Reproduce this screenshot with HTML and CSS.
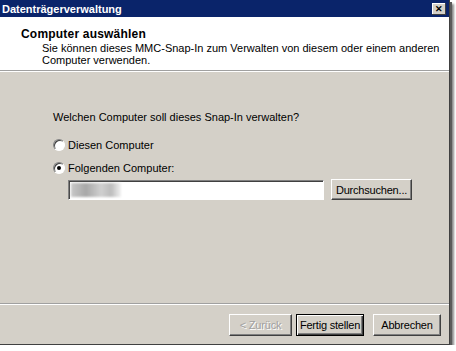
FILE: index.html
```html
<!DOCTYPE html>
<html lang="de">
  <head>
    <meta charset="UTF-8">
    <title>Datenträgerverwaltung</title>
    <link rel="stylesheet" href="styles.css">
  </head>
  <body>
    <div class="window">
      <div class="titlebar">
        <span class="title">Datenträgerverwaltung</span>
        <span class="close">&#x2715;</span>
      </div>

      <div class="header">
        <div class="header-title">Computer auswählen</div>
        <div class="header-text">
          Sie können dieses MMC-Snap-In zum Verwalten von diesem oder einem anderen<br>
          Computer verwenden.
        </div>
      </div>

      <div class="content">
        <p class="question">Welchen Computer soll dieses Snap-In verwalten?</p>

        <label class="radio-row">
          <span class="radio"></span>
          Diesen Computer
        </label>
        <label class="radio-row">
          <span class="radio checked"></span>
          Folgenden Computer:
        </label>

        <div class="input-row">
          <div class="textbox"><span class="blurred"></span></div>
          <button class="btn browse">Durchsuchen...</button>
        </div>
      </div>

      <div class="footer">
        <button class="btn disabled">&lt; Zurück</button>
        <button class="btn default">Fertig stellen</button>
        <button class="btn cancel">Abbrechen</button>
      </div>
    </div>
  </body>
</html>
```

FILE: styles.css
```css
body {
  margin: 0;
  background-color: #fff;
  font-family: "Liberation Sans", Arial, sans-serif;
  font-size: 11px;
  color: #000;
}
.window {
  width: 450px;
  height: 345px;
  display: flex;
  flex-direction: column;
  background-color: #d4d0c8;
  border-right: 1px solid #404040;
  border-bottom: 1px solid #404040;
  box-sizing: border-box;
  box-shadow: 2px 2px 0 #5a5a5a, 4px 4px 2px #8a8a8a;
}
.titlebar {
  height: 17px;
  background-color: #0a246a;
  color: #fff;
  display: flex;
  align-items: center;
  justify-content: space-between;
  padding: 0 3px 0 2px;
}
.title {
  font-weight: bold;
  font-size: 11px;
}
.close {
  width: 14px;
  height: 12px;
  background-color: #d4d0c8;
  color: #000;
  font-size: 9px;
  font-weight: bold;
  line-height: 12px;
  text-align: center;
  box-sizing: border-box;
  box-shadow: inset -1px -1px #404040, inset 1px 1px #fff;
}
.header {
  height: 54px;
  background-color: #fff;
  padding: 10px 0 0 21px;
  box-sizing: border-box;
  border-bottom: 1px solid #a0a0a0;
  box-shadow: 0 1px 0 #fff;
}
.header-title {
  font-weight: bold;
  font-size: 12px;
  letter-spacing: 0.2px;
  margin-bottom: 1px;
}
.header-text {
  padding-left: 21px;
  line-height: 12px;
}
.content {
  flex: 1;
  padding: 40px 0 0 53px;
  border-bottom: 1px solid #a0a0a0;
  box-shadow: 0 1px 0 #fff;
}
.question {
  margin: 0 0 16px 0;
}
.radio-row {
  display: flex;
  align-items: center;
  gap: 3px;
  height: 12px;
  margin-bottom: 11px;
}
.radio {
  width: 12px;
  height: 12px;
  border-radius: 50%;
  background-color: #fff;
  box-sizing: border-box;
  border: 1px solid;
  border-color: #808080 #fff #fff #808080;
  box-shadow: inset 1px 1px #404040;
  position: relative;
}
.radio.checked::after {
  content: "";
  position: absolute;
  left: 3px;
  top: 3px;
  width: 4px;
  height: 4px;
  border-radius: 50%;
  background-color: #000;
}
.input-row {
  display: flex;
  align-items: center;
  gap: 7px;
  margin: -6px 0 0 15px;
}
.textbox {
  width: 256px;
  height: 20px;
  background-color: #fff;
  box-sizing: border-box;
  border: 1px solid;
  border-color: #808080 #fff #fff #808080;
  box-shadow: inset 1px 1px #404040;
  padding: 2px;
}
.blurred {
  display: block;
  width: 50px;
  height: 14px;
  background: linear-gradient(90deg, #c8c8c8, #a8a8a8 30%, #d0d0d0 60%, #bcbcbc 80%, #f2f2f2);
  filter: blur(1px);
}
.btn {
  height: 21px;
  font-family: "Liberation Sans", Arial, sans-serif;
  font-size: 11px;
  letter-spacing: -0.2px;
  color: #000;
  background-color: #d4d0c8;
  border: 1px solid;
  border-color: #fff #404040 #404040 #fff;
  box-shadow: inset -1px -1px #808080;
  padding: 0;
}
.browse {
  width: 81px;
}
.footer {
  height: 40px;
  display: flex;
  justify-content: flex-end;
  align-items: flex-start;
  padding: 10px 8px 0 0;
  box-sizing: border-box;
}
.disabled {
  width: 63px;
  height: 22px;
  color: #a0a0a0;
  text-shadow: 1px 1px #fff;
  margin-right: 4px;
}
.default {
  width: 68px;
  height: 22px;
  border: 1px solid #000;
  box-shadow: inset 1px 1px #fff, inset -1px -1px #404040, inset -2px -2px #808080;
  margin-right: 9px;
}
.cancel {
  width: 68px;
  height: 22px;
}
```
